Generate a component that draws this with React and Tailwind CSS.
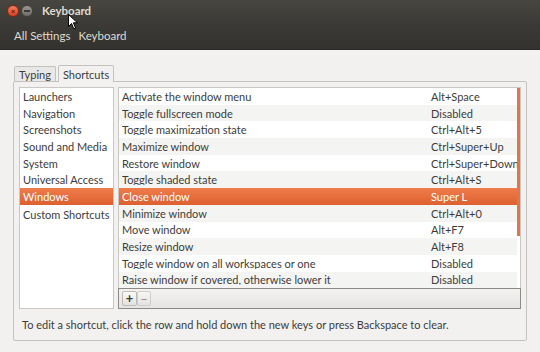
import React from "react";

const categories = [
  "Launchers",
  "Navigation",
  "Screenshots",
  "Sound and Media",
  "System",
  "Universal Access",
  "Windows",
  "Custom Shortcuts",
];

const shortcuts = [
  ["Activate the window menu", "Alt+Space"],
  ["Toggle fullscreen mode", "Disabled"],
  ["Toggle maximization state", "Ctrl+Alt+5"],
  ["Maximize window", "Ctrl+Super+Up"],
  ["Restore window", "Ctrl+Super+Down"],
  ["Toggle shaded state", "Ctrl+Alt+S"],
  ["Close window", "Super L"],
  ["Minimize window", "Ctrl+Alt+0"],
  ["Move window", "Alt+F7"],
  ["Resize window", "Alt+F8"],
  ["Toggle window on all workspaces or one", "Disabled"],
  ["Raise window if covered, otherwise lower it", "Disabled"],
];

export default function App() {
  return (
    <div
      className="relative w-[540px] h-[352px] overflow-hidden bg-[#f2f1f0] text-[#3c3c3c] text-[11px] leading-none"
      style={{ fontFamily: "Lato, 'Liberation Sans', sans-serif" }}
    >
      {/* Title bar */}
      <div className="h-[22px] bg-gradient-to-b from-[#47463f] to-[#3c3b37] flex items-center pl-[7px]">
        <div className="w-[12px] h-[12px] rounded-full bg-gradient-to-b from-[#f47a58] to-[#d9411f] border border-[#7a2a18] flex items-center justify-center text-[8px] text-[#5a1a0c] font-bold">
          ×
        </div>
        <div className="ml-[2px] w-[12px] h-[12px] rounded-full bg-gradient-to-b from-[#9a9893] to-[#6e6c67] border border-[#44433f] flex items-center justify-center">
          <div className="w-[6px] h-[2px] bg-[#3c3b37]" />
        </div>
        <div className="ml-[9px] text-[#dfdbd2] font-bold text-[11.5px]">Keyboard</div>
      </div>
      {/* Toolbar */}
      <div className="h-[28px] bg-gradient-to-b from-[#3c3b37] to-[#33322e] border-b border-[#2a2925] flex items-center pl-[14px] gap-[8px] text-[#dfdbd2] text-[11.5px]">
        <span>All Settings</span>
        <span>Keyboard</span>
      </div>

      {/* Body */}
      <div className="px-[13px] pt-[14px]">
        {/* Tabs */}
        <div className="flex items-end h-[17px] pl-[1px]">
          <div className="h-[15px] px-[4px] flex items-center bg-[#e9e8e6] border border-[#c4c2bf] border-b-0 rounded-t-[2px] text-[#3c3c3c]">
            Typing
          </div>
          <div className="ml-[2px] h-[17px] px-[4px] flex items-center bg-[#f2f1f0] border border-[#c4c2bf] border-b-0 rounded-t-[2px] relative top-[1px] z-10">
            Shortcuts
          </div>
        </div>
        {/* Notebook */}
        <div className="h-[260px] w-[514px] border border-[#c4c2bf] rounded-[2px] bg-[#f2f1f0] px-[5px] pt-[5px]">
          <div className="flex gap-[4px] h-[222px]">
            {/* Left list */}
            <div className="w-[95px] shrink-0 h-full bg-white border border-[#c9c7c4]">
              {categories.map((c, i) => (
                <div
                  key={c}
                  className={
                    "h-[16.7px] flex items-center pl-[3px] whitespace-nowrap " +
                    (c === "Windows"
                      ? "bg-gradient-to-b from-[#f07c4b] to-[#dd6030] text-white"
                      : "") +
                    (i === 7 ? " mt-[1px]" : "")
                  }
                >
                  {c}
                </div>
              ))}
            </div>
            {/* Right tree */}
            <div className="flex-1 min-w-0 h-full flex flex-col">
              <div className="flex-1 bg-white border border-[#c9c7c4] border-b-0 relative overflow-hidden">
                {shortcuts.map(([name, key], i) => {
                  const sel = i === 6;
                  return (
                    <div
                      key={name}
                      className={
                        "h-[16.7px] flex items-center whitespace-nowrap pl-[3px] " +
                        (sel
                          ? "bg-gradient-to-b from-[#f07c4b] to-[#dd6030] text-white"
                          : i % 2 === 1
                          ? "bg-[#f4f4f3] mr-[3px]"
                          : "bg-white mr-[3px]")
                      }
                    >
                      <span className="w-[306px] shrink-0 overflow-hidden">{name}</span>
                      <span className="ml-[3px]">{key}</span>
                    </div>
                  );
                })}
                <div className="absolute right-0 top-0 w-[3px] h-[148px] bg-[#e5743f]" />
              </div>
              {/* inline toolbar */}
              <div className="h-[21px] border border-[#8c8a86] bg-gradient-to-b from-[#f3f2f1] to-[#e6e5e3] flex items-center pl-[3px]">
                <div className="w-[15px] h-[15px] flex items-center justify-center border border-[#bdbbb8] rounded-[2px] bg-gradient-to-b from-[#fbfbfa] to-[#e2e1df] text-[13px] font-bold text-[#3c3c3c]">
                  +
                </div>
                <div className="w-[14px] h-[15px] flex items-center justify-center border border-[#cfcdca] rounded-[2px] bg-gradient-to-b from-[#f6f6f5] to-[#e4e3e1] text-[12px] text-[#8a8885]">
                  −
                </div>
              </div>
            </div>
          </div>
          <div className="pt-[10px] pl-[3px]">
            To edit a shortcut, click the row and hold down the new keys or press Backspace to clear.
          </div>
        </div>
      </div>

      {/* Mouse cursor */}
      <svg
        className="absolute left-[68px] top-[14px]"
        width="10"
        height="16"
        viewBox="0 0 10 16"
      >
        <path d="M0.5 0.5 L0.5 12.5 L3.5 9.5 L5.8 14.8 L7.6 14 L5.4 8.8 L9.5 8.8 Z" fill="white" stroke="black" strokeWidth="1" />
      </svg>
    </div>
  );
}
